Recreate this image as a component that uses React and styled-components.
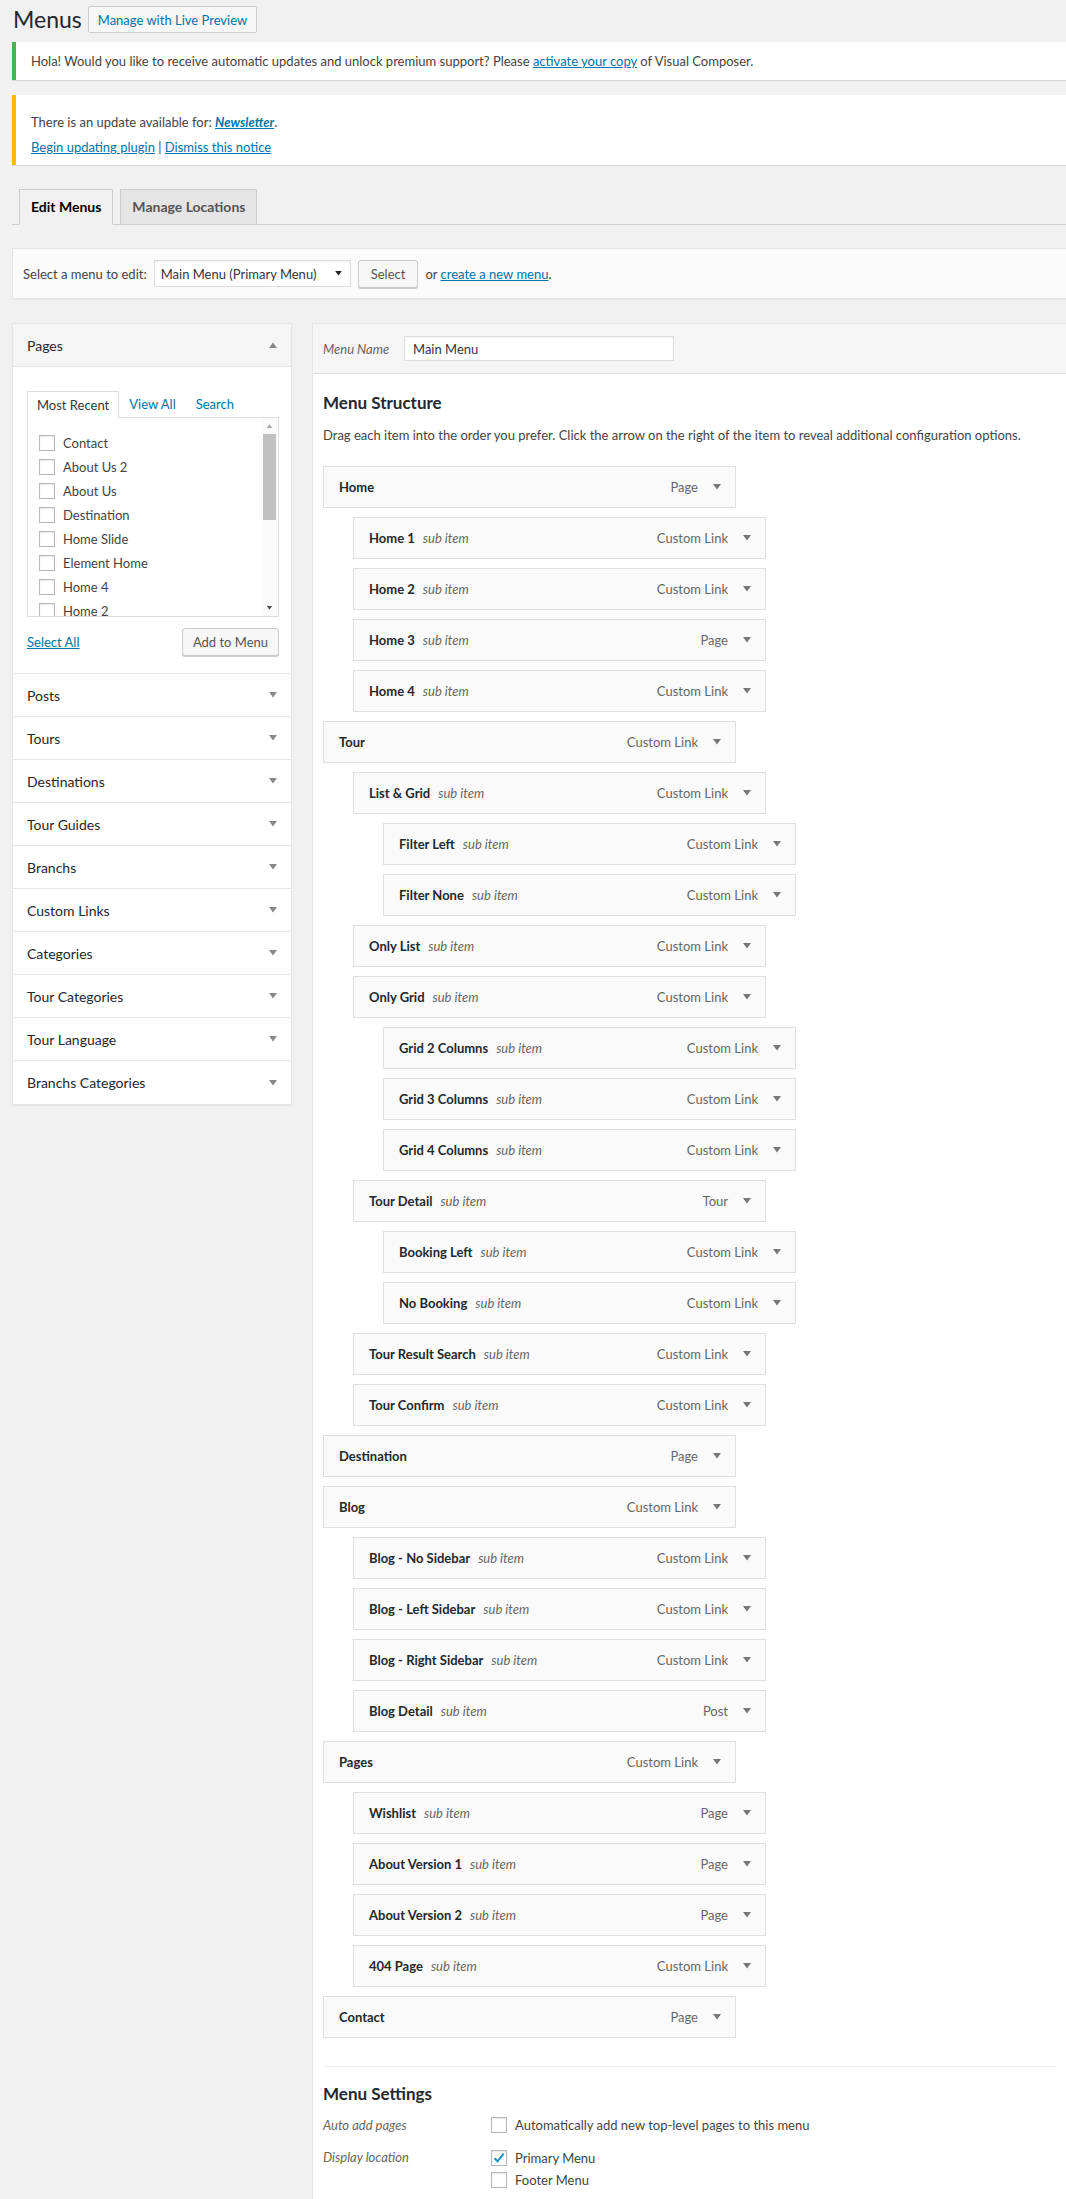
import React from "react";
import styled, { createGlobalStyle } from "styled-components";

const GlobalStyle = createGlobalStyle`
  html, body {
    margin: 0;
    padding: 0;
    background: #f1f1f1;
    overflow-x: hidden;
  }
  body {
    font-family: Lato, "Open Sans", "Liberation Sans", sans-serif;
    font-size: 13px;
    color: #444;
  }
  * { box-sizing: border-box; }
`;

const Page = styled.div`
  padding-left: 12px;
  min-height: 2199px;
`;

const TitleRow = styled.div`
  display: flex;
  align-items: center;
  padding-top: 6px;
  height: 33px;
`;

const Title = styled.h1`
  margin: 0 6px 0 1px;
  font-size: 23px;
  font-weight: 400;
  line-height: 27px;
  color: #23282d;
`;

const TitleAction = styled.a`
  display: inline-flex;
  align-items: center;
  height: 27px;
  padding: 0 9px;
  border: 1px solid #ccc;
  border-radius: 2px;
  background: #f7f7f7;
  color: #0073aa;
  font-size: 13px;
  text-decoration: none;
`;

const Notice = styled.div`
  margin-top: ${(p) => p.$mt}px;
  background: #fff;
  border-left: 4px solid ${(p) => p.$color};
  box-shadow: 0 1px 1px 0 rgba(0, 0, 0, 0.1);
  padding: ${(p) => p.$pad};
  line-height: 20px;
  color: #444;
`;

const NoticeLine = styled.p`
  margin: ${(p) => (p.$second ? "5px" : "0")} 0 0;
`;

const Link = styled.a`
  color: #0073aa;
  text-decoration: underline;
  font-weight: ${(p) => (p.$strong ? 700 : 400)};
  font-style: ${(p) => (p.$italic ? "italic" : "normal")};
`;

const TabBar = styled.div`
  margin-top: 24px;
  display: flex;
  gap: 7px;
  padding-left: 7px;
  border-bottom: 1px solid #ccc;
`;

const Tab = styled.div`
  margin-bottom: -1px;
  padding: 5px 11px;
  line-height: 24px;
  font-size: 14px;
  font-weight: 700;
  border: 1px solid #ccc;
  border-bottom-color: ${(p) => (p.$active ? "#f1f1f1" : "#ccc")};
  background: ${(p) => (p.$active ? "#f1f1f1" : "#e5e5e5")};
  color: ${(p) => (p.$active ? "#000" : "#555")};
`;

const ManageBar = styled.div`
  margin-top: 23px;
  display: flex;
  align-items: center;
  gap: 7px;
  padding: 10px 10px;
  background: #fbfbfb;
  border: 1px solid #e5e5e5;
  border-right: none;
  box-shadow: 0 1px 1px rgba(0, 0, 0, 0.04);
  height: 51px;
`;

const SelectBox = styled.div`
  display: flex;
  align-items: center;
  justify-content: space-between;
  width: 197px;
  height: 27px;
  padding: 0 8px 0 6px;
  border: 1px solid #ddd;
  background: #fff;
  box-shadow: inset 0 1px 2px rgba(0, 0, 0, 0.07);
  color: #32373c;
  font-size: 13px;
`;

const Button = styled.button`
  height: 28px;
  padding: 0 ${(p) => p.$px || 10}px;
  border: 1px solid #ccc;
  border-radius: 3px;
  background: #f7f7f7;
  box-shadow: 0 1px 0 #ccc;
  color: #555;
  font-family: inherit;
  font-size: 13px;
`;

const Columns = styled.div`
  margin-top: 24px;
  display: flex;
  align-items: flex-start;
  gap: 20px;
`;

const SidePanel = styled.div`
  width: 280px;
  flex: none;
  background: #fff;
  border: 1px solid #e5e5e5;
  box-shadow: 0 1px 1px rgba(0, 0, 0, 0.06);
`;

const SectionHead = styled.div`
  display: flex;
  align-items: center;
  justify-content: space-between;
  height: 43px;
  padding: 0 14px 0 14px;
  border-bottom: ${(p) => (p.$last ? "none" : "1px solid #e5e5e5")};
  background: ${(p) => (p.$open ? "#f5f5f5" : "#fff")};
  font-size: 14px;
  color: #23282d;
`;

const SectionBody = styled.div`
  padding: 24px 12px 17px 14px;
  border-bottom: 1px solid #e5e5e5;
`;

const InnerTabs = styled.div`
  display: flex;
  align-items: flex-end;
  height: 26px;
`;

const InnerTab = styled.div`
  height: ${(p) => (p.$active ? 27 : 26)}px;
  margin-bottom: ${(p) => (p.$active ? -1 : 0)}px;
  padding: 0 ${(p) => (p.$active ? 9 : 10)}px;
  display: flex;
  align-items: center;
  position: relative;
  z-index: ${(p) => (p.$active ? 1 : 0)};
  background: #fff;
  border: ${(p) => (p.$active ? "1px solid #ddd" : "none")};
  border-bottom: none;
  color: ${(p) => (p.$active ? "#32373c" : "#0073aa")};
  font-size: 13px;
`;

const ListBox = styled.div`
  height: 200px;
  border: 1px solid #ddd;
  display: flex;
  overflow: hidden;
`;

const CheckList = styled.div`
  flex: 1;
  padding: 13px 0 0 11px;
`;

const CheckRow = styled.div`
  display: flex;
  align-items: center;
  height: ${(p) => p.$h || 24}px;
  gap: 8px;
  color: #444;
`;

const Box = styled.span`
  width: 16px;
  height: 16px;
  flex: none;
  border: 1px solid #b4b9be;
  background: #fff;
  box-shadow: inset 0 1px 2px rgba(0, 0, 0, 0.1);
  display: inline-flex;
  align-items: center;
  justify-content: center;
`;

const ScrollTrack = styled.div`
  width: 17px;
  flex: none;
  display: flex;
  flex-direction: column;
  align-items: center;
  background: #fafafa;
`;

const ScrollArrow = styled.div`
  height: 16px;
  display: flex;
  align-items: center;
  justify-content: center;
`;

const ScrollThumb = styled.div`
  width: 13px;
  height: 86px;
  background: #c1c1c1;
`;

const Spacer = styled.div`
  flex: 1;
`;

const SideFooter = styled.div`
  margin-top: 11px;
  display: flex;
  align-items: center;
  justify-content: space-between;
`;

const MainPanel = styled.div`
  flex: 1;
  min-width: 0;
  background: #fff;
  border-left: 1px solid #e5e5e5;
  border-top: 1px solid #e5e5e5;
  padding-bottom: 80px;
`;

const MainHeader = styled.div`
  height: 50px;
  display: flex;
  align-items: center;
  padding: 0 10px;
  background: #f5f5f5;
  border-bottom: 1px solid #dfdfdf;
`;

const FieldLabel = styled.span`
  width: ${(p) => p.$w}px;
  flex: none;
  font-style: italic;
  color: #666;
`;

const TextInput = styled.div`
  width: 270px;
  height: 25px;
  display: flex;
  align-items: center;
  padding: 0 8px;
  border: 1px solid #ddd;
  background: #fff;
  box-shadow: inset 0 1px 2px rgba(0, 0, 0, 0.07);
  color: #32373c;
`;

const MainBody = styled.div`
  padding: 0 10px;
`;

const Heading = styled.h3`
  margin: ${(p) => p.$mt}px 0 0;
  font-size: 17px;
  font-weight: 700;
  line-height: 22px;
  color: #23282d;
`;

const Description = styled.p`
  margin: 11px 0 0;
  line-height: 20px;
  color: #444;
`;

const MenuList = styled.div`
  margin-top: 21px;
  display: flex;
  flex-direction: column;
  gap: 9px;
`;

const MenuItem = styled.div`
  margin-left: ${(p) => p.$depth * 30}px;
  width: 413px;
  height: 42px;
  display: flex;
  align-items: center;
  padding: 0 14px 0 15px;
  border: 1px solid #dfdfdf;
  background: #fafafa;
`;

const ItemTitle = styled.span`
  font-weight: 700;
  color: #23282d;
`;

const SubLabel = styled.span`
  margin-left: 8px;
  font-style: italic;
  color: #666;
`;

const ItemType = styled.span`
  margin-left: auto;
  margin-right: 15px;
  color: #666;
`;

const Divider = styled.div`
  margin-top: 28px;
  border-top: 1px solid #eee;
`;

const SettingsGrid = styled.div`
  display: grid;
  grid-template-columns: 168px 1fr;
  margin-top: 10px;
  row-gap: 12px;
  line-height: 20px;
`;

const Options = styled.div`
  display: flex;
  flex-direction: column;
`;

const Caret = ({ up, color = "#777", w = 8, h = 6 }) => (
  <svg width={w} height={h} viewBox="0 0 8 6" style={{ display: "block", flex: "none" }}>
    <polygon points={up ? "0,6 8,6 4,0.5" : "0,0 8,0 4,5.5"} fill={color} />
  </svg>
);

const Check = () => (
  <svg width="14" height="14" viewBox="0 0 14 14" style={{ display: "block" }}>
    <path d="M2.5 7.2 L5.6 10.3 L11.6 2.6" stroke="#1e8cbe" strokeWidth="2" fill="none" />
  </svg>
);

const pages = ["Contact", "About Us 2", "About Us", "Destination", "Home Slide", "Element Home", "Home 4", "Home 2"];

const sections = ["Posts", "Tours", "Destinations", "Tour Guides", "Branchs", "Custom Links", "Categories", "Tour Categories", "Tour Language", "Branchs Categories"];

const items = [
  ["Home", "Page", 0],
  ["Home 1", "Custom Link", 1],
  ["Home 2", "Custom Link", 1],
  ["Home 3", "Page", 1],
  ["Home 4", "Custom Link", 1],
  ["Tour", "Custom Link", 0],
  ["List & Grid", "Custom Link", 1],
  ["Filter Left", "Custom Link", 2],
  ["Filter None", "Custom Link", 2],
  ["Only List", "Custom Link", 1],
  ["Only Grid", "Custom Link", 1],
  ["Grid 2 Columns", "Custom Link", 2],
  ["Grid 3 Columns", "Custom Link", 2],
  ["Grid 4 Columns", "Custom Link", 2],
  ["Tour Detail", "Tour", 1],
  ["Booking Left", "Custom Link", 2],
  ["No Booking", "Custom Link", 2],
  ["Tour Result Search", "Custom Link", 1],
  ["Tour Confirm", "Custom Link", 1],
  ["Destination", "Page", 0],
  ["Blog", "Custom Link", 0],
  ["Blog - No Sidebar", "Custom Link", 1],
  ["Blog - Left Sidebar", "Custom Link", 1],
  ["Blog - Right Sidebar", "Custom Link", 1],
  ["Blog Detail", "Post", 1],
  ["Pages", "Custom Link", 0],
  ["Wishlist", "Page", 1],
  ["About Version 1", "Page", 1],
  ["About Version 2", "Page", 1],
  ["404 Page", "Custom Link", 1],
  ["Contact", "Page", 0],
];

export default function App() {
  return (
    <>
      <GlobalStyle />
      <Page>
        <TitleRow>
          <Title>Menus</Title>
          <TitleAction>Manage with Live Preview</TitleAction>
        </TitleRow>

        <Notice $mt={9} $color="#46b450" $pad="9px 15px">
          Hola! Would you like to receive automatic updates and unlock premium support? Please{" "}
          <Link>activate your copy</Link> of Visual Composer.
        </Notice>

        <Notice $mt={15} $color="#ffb900" $pad="17px 15px 8px">
          <NoticeLine>
            There is an update available for: <Link $strong $italic>Newsletter</Link>.
          </NoticeLine>
          <NoticeLine $second>
            <Link>Begin updating plugin</Link> | <Link>Dismiss this notice</Link>
          </NoticeLine>
        </Notice>

        <TabBar>
          <Tab $active>Edit Menus</Tab>
          <Tab>Manage Locations</Tab>
        </TabBar>

        <ManageBar>
          <span>Select a menu to edit:</span>
          <SelectBox>
            <span>Main Menu (Primary Menu)</span>
            <Caret color="#222" w={7} h={5} />
          </SelectBox>
          <Button $px={12}>Select</Button>
          <span>
            or <Link>create a new menu</Link>.
          </span>
        </ManageBar>

        <Columns>
          <SidePanel>
            <SectionHead $open>
              <span>Pages</span>
              <Caret up color="#888" />
            </SectionHead>
            <SectionBody>
              <InnerTabs>
                <InnerTab $active>Most Recent</InnerTab>
                <InnerTab>View All</InnerTab>
                <InnerTab>Search</InnerTab>
              </InnerTabs>
              <ListBox>
                <CheckList>
                  {pages.map((p) => (
                    <CheckRow key={p}>
                      <Box />
                      <span>{p}</span>
                    </CheckRow>
                  ))}
                </CheckList>
                <ScrollTrack>
                  <ScrollArrow>
                    <Caret up color="#a3a3a3" w={7} h={4} />
                  </ScrollArrow>
                  <ScrollThumb />
                  <Spacer />
                  <ScrollArrow>
                    <Caret color="#505050" w={7} h={4} />
                  </ScrollArrow>
                </ScrollTrack>
              </ListBox>
              <SideFooter>
                <Link>Select All</Link>
                <Button>Add to Menu</Button>
              </SideFooter>
            </SectionBody>
            {sections.map((s, i) => (
              <SectionHead key={s} $last={i === sections.length - 1}>
                <span>{s}</span>
                <Caret color="#888" />
              </SectionHead>
            ))}
          </SidePanel>

          <MainPanel>
            <MainHeader>
              <FieldLabel $w={81}>Menu Name</FieldLabel>
              <TextInput>Main Menu</TextInput>
            </MainHeader>
            <MainBody>
              <Heading $mt={18}>Menu Structure</Heading>
              <Description>
                Drag each item into the order you prefer. Click the arrow on the right of the item to reveal additional
                configuration options.
              </Description>
              <MenuList>
                {items.map(([title, type, depth], i) => (
                  <MenuItem key={i} $depth={depth}>
                    <ItemTitle>{title}</ItemTitle>
                    {depth > 0 && <SubLabel>sub item</SubLabel>}
                    <ItemType>{type}</ItemType>
                    <Caret color="#777" />
                  </MenuItem>
                ))}
              </MenuList>
              <Divider />
              <Heading $mt={16}>Menu Settings</Heading>
              <SettingsGrid>
                <FieldLabel>Auto add pages</FieldLabel>
                <CheckRow $h={20}>
                  <Box />
                  <span>Automatically add new top-level pages to this menu</span>
                </CheckRow>
                <FieldLabel>Display location</FieldLabel>
                <Options>
                  <CheckRow $h={22}>
                    <Box>
                      <Check />
                    </Box>
                    <span>Primary Menu</span>
                  </CheckRow>
                  <CheckRow $h={22}>
                    <Box />
                    <span>Footer Menu</span>
                  </CheckRow>
                </Options>
              </SettingsGrid>
            </MainBody>
          </MainPanel>
        </Columns>
      </Page>
    </>
  );
}
